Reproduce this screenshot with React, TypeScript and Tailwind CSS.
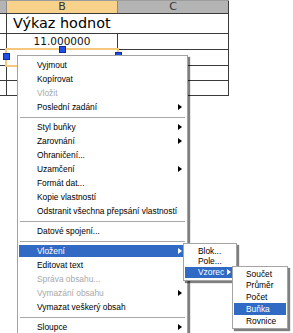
import React from "react";

type Item =
  | "sep"
  | { t: string; sub?: boolean; dis?: boolean; hl?: boolean };

const mainItems: Item[] = [
  { t: "Vyjmout" },
  { t: "Kopírovat" },
  { t: "Vložit", dis: true },
  { t: "Poslední zadání", sub: true },
  "sep",
  { t: "Styl buňky", sub: true },
  { t: "Zarovnání", sub: true },
  { t: "Ohraničení..." },
  { t: "Uzamčení", sub: true },
  { t: "Formát dat..." },
  { t: "Kopie vlastností" },
  { t: "Odstranit všechna přepsání vlastností" },
  "sep",
  { t: "Datové spojení..." },
  "sep",
  { t: "Vložení", sub: true, hl: true },
  { t: "Editovat text" },
  { t: "Správa obsahu...", dis: true },
  { t: "Vymazání obsahu", dis: true, sub: true },
  { t: "Vymazat veškerý obsah" },
  "sep",
  { t: "Sloupce", sub: true },
];

function Arrow({ white }: { white?: boolean }) {
  return (
    <span
      className={`ml-auto w-0 h-0 border-y-[3.5px] border-y-transparent border-l-[4px] ${
        white ? "border-l-white" : "border-l-black"
      }`}
    />
  );
}

function Handle({ className }: { className: string }) {
  return (
    <div
      className={`absolute w-[7px] h-[7px] bg-[#1f4fe6] border border-[#0b2c9c] ${className}`}
    />
  );
}

export default function App() {
  return (
    <div className="relative w-[293px] h-[333px] bg-white overflow-hidden font-['Liberation_Sans',Arial,sans-serif]">
      {/* tabulka */}
      <div className="w-[229px] flex flex-col border-t border-[#9c9c9c]">
        {/* hlavička sloupců */}
        <div className="flex h-[13px] border-b border-[#3a3a3a] text-[11px] leading-[12px] text-[#333] font-['DejaVu_Sans',sans-serif]">
          <div className="w-[7px] bg-[#b4b4b4] border-r border-[#8a8a8a]" />
          <div className="w-[111px] bg-[#f8d18a] border-r border-[#8a8a8a] text-center">B</div>
          <div className="w-[111px] bg-[#b4b4b4] border-r border-[#3a3a3a] text-center">C</div>
        </div>
        {/* řádek 1 */}
        <div className="flex h-[20px] border-b border-[#3a3a3a]">
          <div className="w-[7px] border-r border-[#3a3a3a]" />
          <div className="w-[222px] border-r border-[#3a3a3a] pl-[6px] text-[14.4px] leading-[19px] text-black font-['DejaVu_Sans',sans-serif]">
            Výkaz hodnot
          </div>
        </div>
        {/* řádek 2 */}
        <div className="flex h-[16px] border-b border-[#3a3a3a]">
          <div className="w-[7px] border-r border-[#3a3a3a]" />
          <div className="w-[111px] border-r border-[#3a3a3a] text-center text-[10.5px] leading-[15px] text-[#111] font-['DejaVu_Sans',sans-serif]">
            11.000000
          </div>
          <div className="w-[111px] border-r border-[#3a3a3a]" />
        </div>
        {/* řádek 3 - vybraná buňka */}
        <div className="flex h-[16px] border-b border-[#3a3a3a]">
          <div className="w-[7px] border-r border-[#3a3a3a]" />
          <div className="relative w-[111px] border-r border-[#3a3a3a]">
            <div className="absolute left-[-2px] top-[-2px] right-[-2px] bottom-[-2px] border-2 border-[#f6c87c]" />
            <Handle className="left-[52px] top-[-4px]" />
            <Handle className="left-[-4px] top-[3px]" />
            <Handle className="right-[-5px] top-[2px]" />
          </div>
          <div className="w-[111px] border-r border-[#3a3a3a]" />
        </div>
        {[0, 1].map((i) => (
          <div key={i} className="flex h-[15px] border-b border-[#3a3a3a]">
            <div className="w-[7px] border-r border-[#3a3a3a]" />
            <div className="w-[111px] border-r border-[#3a3a3a]" />
            <div className="w-[111px] border-r border-[#3a3a3a]" />
          </div>
        ))}
      </div>

      {/* kontextové menu */}
      <div className="absolute left-[17px] top-[55px] w-[171px] bg-white border border-[#a4a4a4] shadow-[2px_2px_1px_rgba(0,0,0,0.5)] pt-[2px] pb-[2px] text-[8.4px] text-black">
        {mainItems.map((it, i) =>
          it === "sep" ? (
            <div key={i} className="h-[6px] flex items-center px-[2px]">
              <div className="w-full h-px bg-[#a8a8a8]" />
            </div>
          ) : (
            <div key={i} className="h-[14px] py-[1px] px-[1px]">
              <div
                className={`h-full flex items-center pl-[18px] pr-[4px] ${
                  it.hl ? "bg-[#316ac5] text-white" : it.dis ? "text-[#a8a8a8]" : ""
                }`}
              >
                <span>{it.t}</span>
                {it.sub && <Arrow white={it.hl} />}
              </div>
            </div>
          )
        )}
      </div>

      {/* podmenu Vložení */}
      <div className="absolute left-[183px] top-[243px] w-[54px] bg-white border border-[#a4a4a4] shadow-[2px_2px_1px_rgba(0,0,0,0.5)] py-[2px] px-[1px] text-[8.4px] text-black">
        <div className="h-[10.5px] flex items-center pl-[13px]">Blok...</div>
        <div className="h-[10.5px] flex items-center pl-[13px]">Pole...</div>
        <div className="h-[10.5px] flex items-center pl-[13px] pr-[4px] bg-[#316ac5] text-white">
          <span>Vzorec</span>
          <Arrow white />
        </div>
      </div>

      {/* podmenu Vzorec */}
      <div className="absolute left-[232px] top-[266px] w-[56px] bg-white border border-[#a4a4a4] shadow-[2px_2px_1px_rgba(0,0,0,0.5)] py-[1px] px-[1px] text-[8.4px] text-black">
        {["Součet", "Průměr", "Počet", "Buňka", "Rovnice"].map((t) => (
          <div
            key={t}
            className={`h-[11.8px] flex items-center pl-[12px] ${
              t === "Buňka" ? "bg-[#316ac5] text-white" : ""
            }`}
          >
            {t}
          </div>
        ))}
      </div>
    </div>
  );
}
